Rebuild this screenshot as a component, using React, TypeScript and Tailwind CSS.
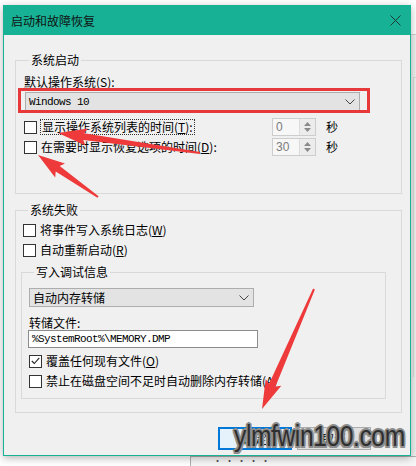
import React from "react";

// tapered annotation arrow (tip, tail)
const arrowPoints = (tx: number, ty: number, sx: number, sy: number, headLen: number, headW: number, neckW: number, tailW: number) => {
  const dx = tx - sx;
  const dy = ty - sy;
  const len = Math.hypot(dx, dy);
  const ux = dx / len;
  const uy = dy / len;
  const nx = -uy;
  const ny = ux;
  const bx = tx - ux * headLen;
  const by = ty - uy * headLen;
  const pts = [
    [sx + (nx * tailW) / 2, sy + (ny * tailW) / 2],
    [bx + (nx * neckW) / 2, by + (ny * neckW) / 2],
    [bx + (nx * headW) / 2 - ux * 3, by + (ny * headW) / 2 - uy * 3],
    [tx, ty],
    [bx - (nx * headW) / 2 - ux * 3, by - (ny * headW) / 2 - uy * 3],
    [bx - (nx * neckW) / 2, by - (ny * neckW) / 2],
    [sx - (nx * tailW) / 2, sy - (ny * tailW) / 2],
  ];
  return pts.map((p) => p[0].toFixed(1) + "," + p[1].toFixed(1)).join(" ");
};

const Check = ({ checked = false }: { checked?: boolean }) => (
  <span className="w-[13px] h-[13px] border border-[#333] bg-white flex items-center justify-center shrink-0">
    {checked && (
      <svg width="9" height="8" viewBox="0 0 9 8">
        <path d="M0.8 4 L3.3 6.5 L8.3 0.8" fill="none" stroke="#222" strokeWidth="1.1" />
      </svg>
    )}
  </span>
);

const Chevron = () => (
  <svg width="10" height="6" viewBox="0 0 10 6">
    <path d="M0.5 0.5 L5 5 L9.5 0.5" fill="none" stroke="#444" strokeWidth="1" />
  </svg>
);

const Spin = ({ value }: { value: string }) => (
  <div className="w-[44px] h-[18px] border border-[#cdcdcd] bg-[#f7f7f7] flex">
    <span className="flex-1 pl-[3px] text-[12px] leading-[16px] text-[#7a7a7a] font-['Liberation_Sans',sans-serif]">{value}</span>
    <span className="w-[16px] border-l border-[#dcdcdc] bg-[#ececec] flex flex-col items-center justify-center gap-[2px]">
      <svg width="7" height="4" viewBox="0 0 7 4"><path d="M0 4 L3.5 0 L7 4 Z" fill="#8a8a8a" /></svg>
      <svg width="7" height="4" viewBox="0 0 7 4"><path d="M0 0 L3.5 4 L7 0 Z" fill="#8a8a8a" /></svg>
    </span>
  </div>
);

const App = () => {
  const red = "#ee3a3a";
  return (
    <div className="relative w-[416px] h-[466px] overflow-hidden bg-white text-black font-['Noto_Sans_CJK_SC','Noto_Sans',sans-serif] text-[12px]">
      {/* windows behind the dialog */}
      <div className="absolute left-[410px] top-[34px] w-[20px] h-[440px] bg-[#f0f0f0] border-t border-[#cfcfcf]">
        <div className="ml-[3px] mt-[42px] h-[300px] border-l border-t border-[#d9d9d9]" />
      </div>
      <div className="absolute left-[190px] top-[456px] w-[240px] h-[10px] bg-[#f6f6f6] border-t border-l border-[#b0b0b0]">
        <div className="ml-[22px] text-[9px] leading-[7px] text-[#444] tracking-[3px]">·····</div>
      </div>

      {/* dialog */}
      <div className="absolute left-[3px] top-[5px] w-[408px] h-[451px] border border-[#17b295] bg-[#f0f0f0] shadow-[0_2px_8px_rgba(0,0,0,0.3)] flex flex-col">
        <div className="h-[29px] bg-[#17b295] flex items-center justify-between pl-[7px] pr-[9px]">
          <span className="text-[12px] leading-[16px] text-[#111]">启动和故障恢复</span>
          <svg width="11" height="11" viewBox="0 0 11 11">
            <path d="M0.5 0.5 L10.5 10.5 M10.5 0.5 L0.5 10.5" stroke="#1d3b34" strokeWidth="1" />
          </svg>
        </div>

        <div className="flex flex-col pl-[11px] pr-[8px] pt-[17px]">
          {/* 系统启动 */}
          <fieldset className="border border-[#d9d9d9] pl-[8px] pb-[37px]">
            <legend className="ml-[5px] px-[2px] leading-[16px]">系统启动</legend>
            <div className="mt-[7px] leading-[14px]">默认操作系统(<u>S</u>):</div>
            <div className="mt-[3px] ml-[1px] w-[335px] h-[19px] border border-[#adadad] bg-[#e3e3e3] flex items-center justify-between pl-[3px] pr-[4px]">
              <span className="font-['Liberation_Mono',monospace] text-[11px] tracking-[-0.6px] leading-[14px]">Windows 10</span>
              <Chevron />
            </div>
            <div className="mt-[7px] h-[18px] flex items-center">
              <div className="w-[248px] flex items-center gap-[3px]">
                <Check />
                <span className="border border-dotted border-[#333] px-[1px] leading-[14px]">显示操作系统列表的时间(<u>T</u>):</span>
              </div>
              <Spin value="0" />
              <span className="ml-[10px]">秒</span>
            </div>
            <div className="mt-[2px] h-[18px] flex items-center">
              <div className="w-[248px] flex items-center gap-[4px]">
                <Check />
                <span className="leading-[14px]">在需要时显示恢复选项的时间(<u>D</u>):</span>
              </div>
              <Spin value="30" />
              <span className="ml-[10px]">秒</span>
            </div>
          </fieldset>

          {/* 系统失败 */}
          <fieldset className="mt-[8px] border border-[#d9d9d9] pl-[7px] pr-[15px] pb-[13px]">
            <legend className="ml-[5px] px-[2px] leading-[16px]">系统失败</legend>
            <div className="mt-[3px] h-[18px] flex items-center gap-[4px]">
              <Check />
              <span>将事件写入系统日志(<u>W</u>)</span>
            </div>
            <div className="mt-[2px] h-[18px] flex items-center gap-[4px]">
              <Check />
              <span>自动重新启动(<u>R</u>)</span>
            </div>

            <fieldset className="mt-[5px] -ml-[2px] border border-[#d9d9d9] pl-[7px] pb-[8px]">
              <legend className="ml-[5px] px-[2px] leading-[16px]">写入调试信息</legend>
              <div className="mt-[8px] w-[225px] h-[19px] border border-[#adadad] bg-[#e3e3e3] flex items-center justify-between pl-[3px] pr-[4px]">
                <span className="leading-[14px]">自动内存转储</span>
                <Chevron />
              </div>
              <div className="mt-[9px] leading-[14px]">转储文件:</div>
              <div className="-ml-[1px] w-[230px] h-[18px] border border-[#8c8c8c] bg-white flex items-center pl-[3px]">
                <span className="font-['Liberation_Mono',monospace] text-[11px] tracking-[-0.6px] leading-[14px]">%SystemRoot%\MEMORY.DMP</span>
              </div>
              <div className="mt-[4px] h-[18px] flex items-center gap-[4px]">
                <Check checked />
                <span>覆盖任何现有文件(<u>O</u>)</span>
              </div>
              <div className="mt-[2px] h-[18px] flex items-center gap-[4px]">
                <Check />
                <span>禁止在磁盘空间不足时自动删除内存转储(<u>A</u>)</span>
              </div>
            </fieldset>
          </fieldset>

          <div className="mt-[14px] flex justify-end gap-[5px] pr-[31px]">
            <button className="w-[74px] h-[23px] border-2 border-[#0078d7] bg-[#e5f1fb] leading-[19px]">确定</button>
            <button className="w-[74px] h-[23px] border border-[#adadad] bg-[#e1e1e1] leading-[21px]">取消</button>
          </div>
        </div>
      </div>

      {/* annotations */}
      <div className="absolute left-[18px] top-[88px] w-[352px] h-[25px] border-[3px] border-[#e8393a]" />
      <svg className="absolute left-0 top-0" width="416" height="466" viewBox="0 0 416 466">
        <polygon points={arrowPoints(58, 133, 200, 153, 26, 17, 7, 2)} fill={red} />
        <polygon points={arrowPoints(38, 155, 98, 197, 24, 17, 7, 2)} fill={red} />
        <polygon points={arrowPoints(262, 409, 314, 289, 26, 17, 7, 2)} fill={red} />
      </svg>

      {/* watermark */}
      <div className="absolute left-[234px] top-[422px] origin-left scale-x-[0.85] text-[29px] leading-[29px] tracking-[-0.5px] text-[#2f2f2f] font-['Liberation_Sans',sans-serif] [text-shadow:1.5px_1.5px_0_#8d8d8d,-1.5px_-1.5px_0_#8d8d8d,1.5px_-1.5px_0_#8d8d8d,-1.5px_1.5px_0_#8d8d8d,2px_0_0_#8d8d8d,-2px_0_0_#8d8d8d,0_2px_0_#8d8d8d,0_-2px_0_#8d8d8d,0_0_3px_#8d8d8d]">
        ylmfwin100.com
      </div>
    </div>
  );
};

export default App;
